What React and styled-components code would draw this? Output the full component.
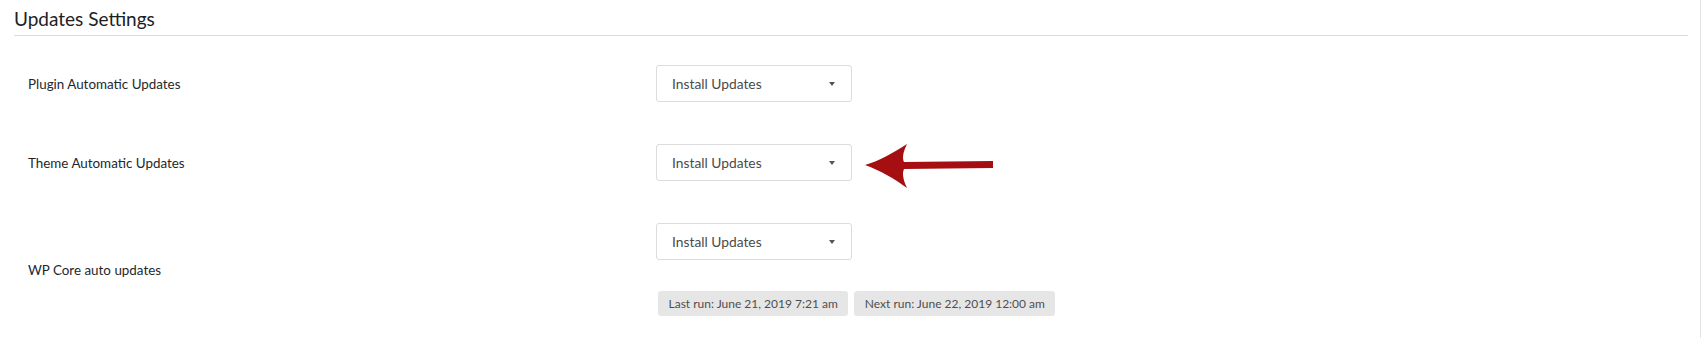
import React from "react";
import styled, { createGlobalStyle } from "styled-components";

const GlobalStyle = createGlobalStyle`
  html, body {
    margin: 0;
    padding: 0;
    background: #fff;
  }
  body {
    font-family: Lato, "Open Sans", "Liberation Sans", sans-serif;
    color: #23282d;
  }
`;

const rows = [
  { label: "Plugin Automatic Updates", value: "Install Updates" },
  { label: "Theme Automatic Updates", value: "Install Updates", pointer: true },
  {
    label: "WP Core auto updates",
    value: "Install Updates",
    runs: ["Last run: June 21, 2019 7:21 am", "Next run: June 22, 2019 12:00 am"],
  },
];

export default function App() {
  return (
    <>
      <GlobalStyle />
      <Panel>
        <Title>Updates Settings</Title>
        <Form>
          {rows.map((row) => (
            <Row key={row.label}>
              <Label>{row.label}</Label>
              <Field>
                <SelectWrap>
                  <Select>
                    <span>{row.value}</span>
                    <Caret />
                  </Select>
                  {row.pointer && <Pointer />}
                </SelectWrap>
                {row.runs && (
                  <Runs>
                    {row.runs.map((r) => (
                      <RunBadge key={r}>{r}</RunBadge>
                    ))}
                  </Runs>
                )}
              </Field>
            </Row>
          ))}
        </Form>
      </Panel>
    </>
  );
}

function Pointer() {
  return (
    <PointerSvg width="132" height="44" viewBox="0 0 132 44">
      <path
        d="M0 21 C14 17 30 8 42 0 C38 8 37 14 39 18 L128 17 L128 24 L39 25 C37 29 38 36 42 44 C30 35 14 26 0 21 Z"
        fill="#a50f12"
      />
    </PointerSvg>
  );
}

const Panel = styled.div`
  width: 1701px;
  height: 338px;
  box-sizing: border-box;
  border-right: 1px solid #e4e4e4;
  padding: 0 12px 0 14px;
  overflow: hidden;
`;

const Title = styled.h2`
  margin: 0;
  padding: 9px 0 6px;
  font-size: 19px;
  font-weight: 400;
  line-height: 20px;
  color: #1e2124;
  border-bottom: 1px solid #dcdcdc;
`;

const Form = styled.div`
  margin-top: 8px;
`;

const Row = styled.div`
  display: grid;
  grid-template-columns: 628px 1fr;
  align-items: center;
  padding: 21px 0;
`;

const Label = styled.div`
  padding-left: 14px;
  font-size: 13.4px;
  color: #23282d;
`;

const Field = styled.div`
  display: flex;
  flex-direction: column;
  gap: 31px;
  padding-left: 14px;
`;

const SelectWrap = styled.div`
  position: relative;
  width: 196px;
`;

const Select = styled.div`
  display: flex;
  align-items: center;
  justify-content: space-between;
  box-sizing: border-box;
  width: 196px;
  height: 37px;
  padding: 0 16px 0 15px;
  border: 1px solid #dcdcdc;
  border-radius: 3px;
  background: #fff;
  font-size: 13.8px;
  color: #4a4a4a;
`;

const Caret = styled.span`
  width: 0;
  height: 0;
  border-left: 3.5px solid transparent;
  border-right: 3.5px solid transparent;
  border-top: 4px solid #555;
`;

const PointerSvg = styled.svg`
  position: absolute;
  left: 209px;
  top: 0px;
  display: block;
`;

const Runs = styled.div`
  display: flex;
  gap: 6px;
  margin-left: 2px;
`;

const RunBadge = styled.span`
  display: inline-flex;
  align-items: center;
  height: 25px;
  padding: 0 10.5px;
  border-radius: 3px;
  background: #e6e6e6;
  font-size: 12px;
  color: #4f4f4f;
`;
